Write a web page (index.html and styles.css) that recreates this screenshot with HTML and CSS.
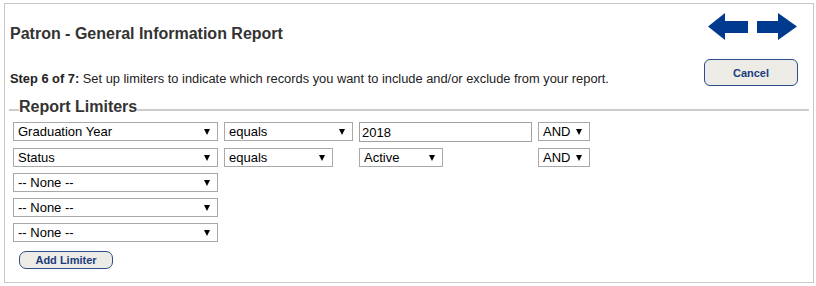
FILE: index.html
```html
<!DOCTYPE html>
<html>

<head>
	<title>Patron - General Information Report</title>
	<meta charset=utf-8>
	<link rel="stylesheet" href="styles.css">
</head>

<body>
	<div id="page">
		<div id="header">
			<div id="intro">
				<div id="title">Patron - General Information Report</div>
				<div id="step"><b>Step 6 of 7:</b> Set up limiters to indicate which records you want to include and/or exclude from your report.</div>
			</div>
			<div id="actions">
				<svg id="nav" width="90" height="27" viewBox="0 0 90 27">
					<polygon points="0,13.5 17,0 17,8 40,8 40,20 17,20 17,27" fill="#003a8f" />
					<polygon points="49,8 70,8 70,0 89,13.5 70,27 70,20 49,20" fill="#003a8f" />
				</svg>
				<button class="btn cancel">Cancel</button>
			</div>
		</div>
		<fieldset id="limiters">
			<legend>Report Limiters</legend>
			<div class="limit-row">
				<span class="pick"><select><option>Graduation Year</option></select></span>
				<span class="pick"><select><option>equals</option></select></span>
				<input class="value" type="text" value="2018">
				<span class="pick"><select><option>AND</option></select></span>
			</div>
			<div class="limit-row">
				<span class="pick"><select><option>Status</option></select></span>
				<span class="pick short-op"><select><option>equals</option></select></span>
				<span class="pick short-val"><select><option>Active</option></select></span>
				<span class="pick"><select><option>AND</option></select></span>
			</div>
			<div class="limit-row">
				<span class="pick"><select><option>-- None --</option></select></span>
			</div>
			<div class="limit-row">
				<span class="pick"><select><option>-- None --</option></select></span>
			</div>
			<div class="limit-row">
				<span class="pick"><select><option>-- None --</option></select></span>
			</div>
			<button class="btn add">Add Limiter</button>
		</fieldset>
	</div>
</body>

</html>
```

FILE: styles.css
```css
body {
	margin: 0;
	font-family: "Liberation Sans", Arial, sans-serif;
	color: #333;
	background: white;
}

#page {
	margin: 3px 2px 0 4px;
	border: 1px solid #c8c8c8;
	box-sizing: border-box;
	height: 280px;
}

#header {
	display: flex;
	justify-content: space-between;
	padding: 9px 15px 0 5px;
}

#title {
	margin-top: 12px;
	font-size: 16px;
	line-height: 18px;
	font-weight: bold;
}

#step {
	margin-top: 28px;
	font-size: 12.85px;
	line-height: 15px;
	color: #222;
}

#actions {
	width: 94px;
	display: flex;
	flex-direction: column;
}

#nav {
	display: block;
	margin-left: 4px;
}

.btn {
	font-family: "Liberation Sans", Arial, sans-serif;
	font-size: 11px;
	font-weight: bold;
	color: #1b3d7e;
	background: #ecebe6;
	border: 1px solid #2c4c8c;
	padding: 0;
	cursor: pointer;
}

.cancel {
	margin-top: 19px;
	width: 94px;
	height: 27px;
	border-radius: 6px;
}

#limiters {
	margin: 12px 4px 0 4px;
	padding: 0 0 0 4px;
	border: none;
	border-top: 2px solid #ccc;
}

#limiters legend {
	margin-left: 6px;
	padding: 0 0 7px 0;
	font-size: 16px;
	line-height: 17px;
	font-weight: bold;
}

.limit-row {
	display: grid;
	grid-template-columns: 205px 129px 173px 52px;
	column-gap: 6px;
	align-items: start;
	margin-bottom: 6px;
}

.pick {
	position: relative;
	display: block;
}

.pick::after {
	content: "";
	position: absolute;
	right: 8px;
	top: 7px;
	border-left: 3px solid transparent;
	border-right: 3px solid transparent;
	border-top: 6px solid #000;
	pointer-events: none;
}

.pick select {
	appearance: none;
	-webkit-appearance: none;
	display: block;
	width: 100%;
	height: 19px;
	margin: 0;
	padding: 0 4px;
	border: 1px solid #a9a9a9;
	border-radius: 0;
	background: white;
	font-family: "Liberation Sans", Arial, sans-serif;
	font-size: 13px;
	color: #000;
}

.short-op {
	width: 109px;
}

.short-val {
	width: 84px;
}

.value {
	box-sizing: border-box;
	height: 20px;
	margin: 0;
	padding: 0 2px;
	border: 1px solid #a0a0a0;
	font-family: "Liberation Sans", Arial, sans-serif;
	font-size: 13px;
	color: #000;
}

.add {
	margin: 3px 0 0 6px;
	width: 94px;
	height: 18px;
	border-radius: 7px;
}
```
